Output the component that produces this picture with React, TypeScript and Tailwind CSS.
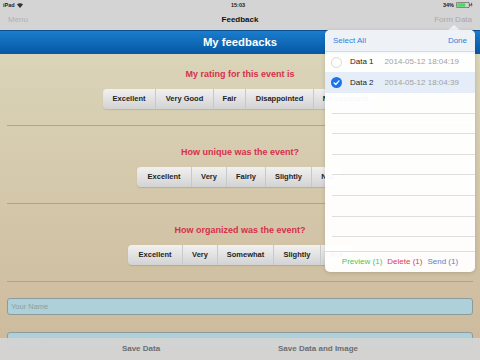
import React from "react";

const F = "font-['Liberation_Sans',Arial,sans-serif]";

type Seg = { label: string; w: number };

const rows: { title: string; segs: Seg[] }[] = [
  {
    title: "My rating for this event is",
    segs: [
      { label: "Excellent", w: 52 },
      { label: "Very Good", w: 58 },
      { label: "Fair", w: 32 },
      { label: "Disappointed", w: 68 },
      { label: "No comment", w: 64 },
    ],
  },
  {
    title: "How unique was the event?",
    segs: [
      { label: "Excellent", w: 54 },
      { label: "Very", w: 35 },
      { label: "Fairly", w: 39 },
      { label: "Slightly", w: 46 },
      { label: "Not", w: 32 },
    ],
  },
  {
    title: "How organized was the event?",
    segs: [
      { label: "Excellent", w: 54 },
      { label: "Very", w: 35 },
      { label: "Somewhat", w: 56 },
      { label: "Slightly", w: 47 },
      { label: "Not", w: 32 },
    ],
  },
];

function Section({ title, segs }: { title: string; segs: Seg[] }) {
  return (
    <div className="flex flex-col shrink-0 pt-[15px] pb-[6px]">
      <div className="h-[11px] leading-[11px] text-center text-[9px] font-bold text-[#d6304b]">{title}</div>
      <div className="mt-[9px] flex justify-center">
        <div className="flex h-[20px] rounded-[4px] bg-gradient-to-b from-[#f1f1f1] to-[#d3d3d3] shadow-[0_1px_1px_rgba(0,0,0,0.12)]">
          {segs.map((s, i) => (
            <div
              key={i}
              style={{ width: s.w }}
              className={`flex items-center justify-center text-[7.5px] font-bold text-[#1e1e1e] ${i > 0 ? "border-l border-[#c9c9c9]" : ""}`}
            >
              {s.label}
            </div>
          ))}
        </div>
      </div>
      <div className="mt-[16px] mx-[7px] h-px bg-[#aba48f]" />
    </div>
  );
}

function Circle({ checked }: { checked: boolean }) {
  if (checked) {
    return (
      <svg width="11" height="11" viewBox="0 0 11 11">
        <circle cx="5.5" cy="5.5" r="5.5" fill="#1a73e8" />
        <path d="M3 5.8 L4.8 7.5 L8 3.8" stroke="#fff" strokeWidth="1.2" fill="none" strokeLinecap="round" strokeLinejoin="round" />
      </svg>
    );
  }
  return (
    <svg width="11" height="11" viewBox="0 0 11 11">
      <circle cx="5.5" cy="5.5" r="5" fill="none" stroke="#cfcfcf" strokeWidth="0.8" />
    </svg>
  );
}

export default function App() {
  return (
    <div className={`relative w-[480px] h-[360px] overflow-hidden ${F}`}>
      <div className="flex flex-col h-full">
        {/* status bar */}
        <div className="h-[10px] shrink-0 bg-[#d4d4d4] flex items-center px-[3px] text-[5.5px] font-bold text-[#222]">
          <div className="flex-1 flex items-center gap-[2px]">
            <span>iPad</span>
            <svg width="6" height="5" viewBox="0 0 6 5">
              <path d="M0 1.6 A4 4 0 0 1 6 1.6 L3 5 Z" fill="#333" />
            </svg>
          </div>
          <div className="flex-1 text-center">15:03</div>
          <div className="flex-1 flex items-center justify-end gap-[2px] pr-[4px]">
            <span>34%</span>
            <svg width="17" height="6" viewBox="0 0 17 6">
              <rect x="0.3" y="0.3" width="13" height="5.4" rx="1.2" fill="none" stroke="#333" strokeWidth="0.6" />
              <rect x="1.3" y="1.3" width="8" height="3.4" rx="0.5" fill="#4cd964" />
              <rect x="13.6" y="2" width="0.8" height="2" fill="#333" />
              <path d="M15.5 0.8 L14.8 3.2 L15.8 3.2 L15.2 5.4 L16.6 2.6 L15.6 2.6 L16.2 0.8 Z" fill="#333" />
            </svg>
          </div>
        </div>
        {/* nav bar */}
        <div className="h-[20px] shrink-0 bg-[#d4d4d4] flex items-center px-[8px] text-[8px]">
          <div className="flex-1 text-[#b2b2b2]">Menu</div>
          <div className="flex-1 text-center font-bold text-[#111]">Feedback</div>
          <div className="flex-1 text-right text-[#a9a9a9]">Form Data</div>
        </div>
        {/* blue header */}
        <div className="h-[24px] shrink-0 bg-gradient-to-b from-[#1a7dcd] to-[#0758a4] border-t border-[#0b4f8d] flex items-center justify-center text-white font-bold text-[11.3px]">
          My feedbacks
        </div>
        {/* content */}
        <div className="flex-1 bg-gradient-to-b from-[#dad4b8] to-[#cdb99b] flex flex-col overflow-hidden">
          {rows.map((r, i) => (
            <Section key={i} title={r.title} segs={r.segs} />
          ))}
          <div className="shrink-0 mt-[10px] mx-[7px] h-[17px] rounded-[3px] bg-[#aed0d8] border border-[#8c9c9e] flex items-center px-[3px] text-[7.5px] text-[#8a9ea3]">
            Your Name
          </div>
          <div className="shrink-0 mt-[17px] mx-[7px] h-[17px] rounded-[3px] bg-[#aed0d8] border border-[#8c9c9e] flex items-center px-[3px] text-[7.5px] text-[#8a9ea3]">
            Your Email
          </div>
        </div>
      </div>

      {/* bottom toolbar */}
      <div className="absolute left-0 right-0 bottom-0 h-[22px] bg-[#d4d4d4]/95 flex items-center text-[8px] font-bold text-[#6e6e6e]">
        <div className="w-[282px] shrink-0 text-center">Save Data</div>
        <div className="w-[120px] shrink-0 ml-[-24px] text-center whitespace-nowrap">Save Data and Image</div>
      </div>

      {/* popover arrow */}
      <div className="absolute left-[447px] top-[25px] w-0 h-0 border-l-[7px] border-r-[7px] border-b-[6px] border-l-transparent border-r-transparent border-b-[#eef2f6]" />
      {/* popover */}
      <div className="absolute left-[325px] top-[30px] w-[150px] h-[242px] rounded-[5px] bg-white/[0.97] shadow-[0_1px_4px_rgba(0,0,0,0.15)] overflow-hidden flex flex-col text-[8px]">
        <div className="h-[22px] shrink-0 bg-[#eef2f6] border-b border-[#d6dbe0] flex items-center justify-between px-[8px] text-[#2f80e0]">
          <span>Select All</span>
          <span>Done</span>
        </div>
        <div className="h-[20px] shrink-0 flex items-center pl-[6px]">
          <Circle checked={false} />
          <span className="ml-[8px] text-[#222]">Data 1</span>
          <span className="ml-[11px] text-[#a2a2a2]">2014-05-12 18:04:19</span>
        </div>
        <div className="h-[21px] shrink-0 flex items-center pl-[6px] bg-[#e4edf8]">
          <Circle checked={true} />
          <span className="ml-[8px] text-[#222]">Data 2</span>
          <span className="ml-[11px] text-[#a2a2a2]">2014-05-12 18:04:39</span>
        </div>
        <div className="flex-1 min-h-0 overflow-hidden flex flex-col">
          {[0, 1, 2, 3, 4, 5, 6].map((i) => (
            <div key={i} className="h-[20.6px] shrink-0 ml-[7px] border-b border-[#dedede]" />
          ))}
        </div>
        <div className="h-[21px] shrink-0 border-t border-[#dedede] flex items-center justify-center gap-[5px]">
          <span className="text-[#45c85a]">Preview (1)</span>
          <span className="text-[#e23a4c]">Delete (1)</span>
          <span className="text-[#5b7fcc]">Send (1)</span>
        </div>
      </div>
    </div>
  );
}
